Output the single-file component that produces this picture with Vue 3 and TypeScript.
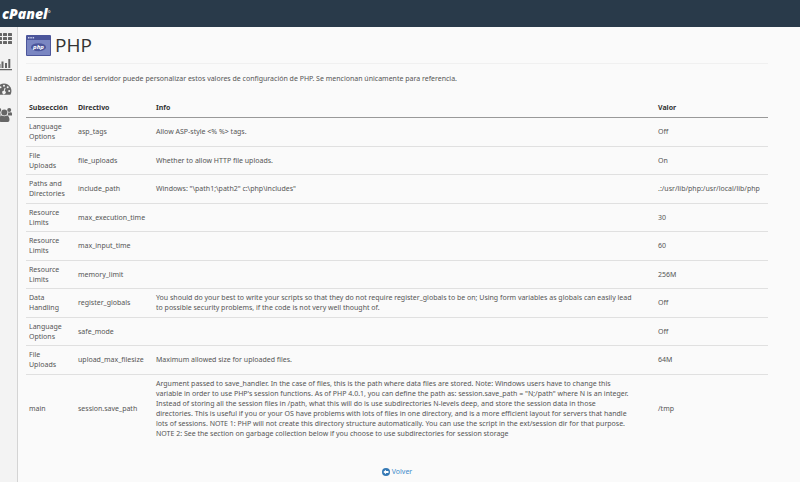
<script setup lang="ts">
interface Directive {
  section: string
  name: string
  info: string
  value: string
}

const directives: Directive[] = [
  { section: 'Language\nOptions', name: 'asp_tags', info: 'Allow ASP-style <% %> tags.', value: 'Off' },
  { section: 'File\nUploads', name: 'file_uploads', info: 'Whether to allow HTTP file uploads.', value: 'On' },
  { section: 'Paths and\nDirectories', name: 'include_path', info: 'Windows: "\\path1;\\path2" c:\\php\\includes"', value: '.:/usr/lib/php:/usr/local/lib/php' },
  { section: 'Resource\nLimits', name: 'max_execution_time', info: '', value: '30' },
  { section: 'Resource\nLimits', name: 'max_input_time', info: '', value: '60' },
  { section: 'Resource\nLimits', name: 'memory_limit', info: '', value: '256M' },
  {
    section: 'Data\nHandling',
    name: 'register_globals',
    info: 'You should do your best to write your scripts so that they do not require register_globals to be on; Using form variables as globals can easily lead\nto possible security problems, if the code is not very well thought of.',
    value: 'Off',
  },
  { section: 'Language\nOptions', name: 'safe_mode', info: '', value: 'Off' },
  { section: 'File\nUploads', name: 'upload_max_filesize', info: 'Maximum allowed size for uploaded files.', value: '64M' },
  {
    section: 'main',
    name: 'session.save_path',
    info: [
      'Argument passed to save_handler. In the case of files, this is the path where data files are stored. Note: Windows users have to change this',
      'variable in order to use PHP\'s session functions. As of PHP 4.0.1, you can define the path as: session.save_path = "N;/path" where N is an integer.',
      'Instead of storing all the session files in /path, what this will do is use subdirectories N-levels deep, and store the session data in those',
      'directories. This is useful if you or your OS have problems with lots of files in one directory, and is a more efficient layout for servers that handle',
      'lots of sessions. NOTE 1: PHP will not create this directory structure automatically. You can use the script in the ext/session dir for that purpose.',
      'NOTE 2: See the section on garbage collection below if you choose to use subdirectories for session storage',
    ].join('\n'),
    value: '/tmp',
  },
]
</script>

<template>
  <div class="page">
    <header class="topbar">
      <a class="brand" href="#">cPanel<span class="mark">°</span></a>
    </header>
    <div class="body">
      <nav class="rail">
        <a href="#" aria-label="Inicio">
          <svg width="14" height="14" viewBox="0 0 14 14" fill="#666">
            <rect x="0" y="1" width="4" height="3" rx="0.5" /><rect x="5" y="1" width="4" height="3" rx="0.5" /><rect x="10" y="1" width="4" height="3" rx="0.5" />
            <rect x="0" y="5" width="4" height="3" rx="0.5" /><rect x="5" y="5" width="4" height="3" rx="0.5" /><rect x="10" y="5" width="4" height="3" rx="0.5" />
            <rect x="0" y="9" width="4" height="3" rx="0.5" /><rect x="5" y="9" width="4" height="3" rx="0.5" /><rect x="10" y="9" width="4" height="3" rx="0.5" />
          </svg>
        </a>
        <a href="#" aria-label="Estadísticas">
          <svg width="16" height="14" viewBox="0 0 16 14" fill="#666">
            <path d="M0 12h17v1.2H0zM2.500 7h2v4h-2zM5.500 4.500h2v6.500h-2zM9 6h2v5H9zM12.300 2h2v9h-2z" />
          </svg>
        </a>
        <a href="#" aria-label="Panel">
          <svg width="16" height="14" viewBox="0 0 16 14" fill="#666">
            <path d="M8 1.4a7.6 7.6 0 0 0-6.4 11.4h12.8A7.6 7.6 0 0 0 8 1.4z" />
            <g fill="#f3f3f3">
              <circle cx="3" cy="9" r="1" /><circle cx="4.5" cy="5.3" r="1" /><circle cx="8" cy="3.8" r="1" /><circle cx="11.7" cy="5.3" r="1" /><circle cx="13.2" cy="9" r="1" />
              <path d="M8.6 5.8l1 .2-.8 3a1.7 1.7 0 1 1-1-.2z" />
            </g>
          </svg>
        </a>
        <a href="#" aria-label="Usuarios">
          <svg width="16" height="16" viewBox="0 0 16 16" fill="#666">
            <circle cx="3.2" cy="3" r="2" /><circle cx="13.2" cy="3" r="2" />
            <path d="M0 8.6V6.5Q0 5 2 5.2q1.200.6 2.600.2Q4 8 5.200 8.600zM16 8.600V6.500Q16 5 14.400 5.200q-1.200.6-2.400.2.4 2.200-.8 3.200z" />
            <circle cx="8.300" cy="5.400" r="3" />
            <path d="M3 13q0-4 2.800-4.400 2.500 1.500 5 0Q13.500 9 13.500 13q0 2-1.800 2H4.800Q3 15 3 13z" />
          </svg>
        </a>
      </nav>
      <main class="content">
        <h1 class="title">
          <svg width="25" height="21" viewBox="0 0 25 21" aria-hidden="true">
            <rect width="25" height="21" rx="1" fill="#4c569b" />
            <rect x="1" y="5" width="23" height="15" fill="#7a86c2" />
            <g fill="#c8cdea"><rect x="2" y="2" width="1.500" height="1.500" /><rect x="4.300" y="2" width="1.500" height="1.500" /><rect x="6.600" y="2" width="1.500" height="1.500" /></g>
            <ellipse cx="12.500" cy="12.200" rx="7.500" ry="4" fill="#4c569b" />
            <text x="12.500" y="14" text-anchor="middle" class="php-mark">php</text>
          </svg>
          <span>PHP</span>
        </h1>
        <p class="lead">El administrador del servidor puede personalizar estos valores de configuración de PHP. Se mencionan únicamente para referencia.</p>
        <table class="directives">
          <colgroup>
            <col class="col-section" />
            <col class="col-name" />
            <col />
            <col class="col-value" />
          </colgroup>
          <thead>
            <tr>
              <th scope="col">Subsección</th>
              <th scope="col">Directivo</th>
              <th scope="col">Info</th>
              <th scope="col">Valor</th>
            </tr>
          </thead>
          <tbody>
            <tr v-for="row in directives" :key="row.name">
              <td>{{ row.section }}</td>
              <td>{{ row.name }}</td>
              <td>{{ row.info }}</td>
              <td>{{ row.value }}</td>
            </tr>
          </tbody>
        </table>
        <a class="back" href="#">
          <svg width="8" height="8" viewBox="0 0 8 8" aria-hidden="true">
            <circle cx="4" cy="4" r="4" fill="#3579b5" />
            <path d="M1.300 4L4 1.700v1.400h2.500v1.800H4v1.400z" fill="#fff" />
          </svg>
          Volver
        </a>
      </main>
    </div>
  </div>
</template>

<style>
body {
  background: #fafafa;
}
</style>

<style scoped>
.page {
  display: flex;
  flex-direction: column;
  min-height: 100vh;
  font: 7px/10px "Noto Sans", "Open Sans", sans-serif;
  color: #555;
}
.topbar {
  display: flex;
  align-items: center;
  height: 27px;
  padding-left: 2px;
  background: #293a4a;
}
.brand {
  font-family: "Open Sans", sans-serif;
  font-size: 14px;
  line-height: 18px;
  font-weight: 800;
  font-style: italic;
  color: #fff;
  text-decoration: none;
}
.mark {
  font-size: 7px;
  font-weight: 400;
  vertical-align: top;
}
.body {
  display: flex;
  flex: 1;
}
.rail {
  display: flex;
  flex-direction: column;
  align-items: flex-end;
  gap: 11px;
  box-sizing: border-box;
  width: 18px;
  padding: 5px 5px 0 0;
  border-right: 1px solid #d4d4d4;
  background: #f3f3f3;
  overflow: hidden;
}
.rail svg,
.title svg,
.back svg {
  display: block;
}
.content {
  display: flex;
  flex-direction: column;
  flex: 1;
  padding: 5px 32px 0 8px;
}
.title {
  display: flex;
  align-items: center;
  gap: 4px;
  margin: 0;
  padding-bottom: 5px;
  border-bottom: 1px solid #f0f0f0;
  font-family: "Open Sans", sans-serif;
  font-size: 19px;
  line-height: 26px;
  font-weight: 400;
  color: #333;
}
.php-mark {
  font-size: 6px;
  font-weight: 700;
  font-style: italic;
  fill: #fff;
}
.lead {
  margin: 10px 0 15px;
}
.directives {
  width: 100%;
  table-layout: fixed;
  border-collapse: separate;
  border-spacing: 0;
}
.col-section {
  width: 49px;
}
.col-name {
  width: 78px;
}
.col-value {
  width: 113px;
}
.directives th,
.directives td {
  padding: 4px 3px;
  text-align: left;
  vertical-align: middle;
}
.directives th {
  border-bottom: 1px solid #999;
  font-weight: 700;
  color: #333;
}
.directives td {
  border-bottom: 1px solid #e0e0e0;
  white-space: pre-line;
}
.directives tr:nth-child(even) td {
  padding-bottom: 3px;
}
.directives tr:last-child td {
  border-bottom: 0;
}
.back {
  display: flex;
  align-items: center;
  align-self: center;
  gap: 2px;
  margin-top: 25px;
  color: #428bca;
  text-decoration: none;
}
</style>
